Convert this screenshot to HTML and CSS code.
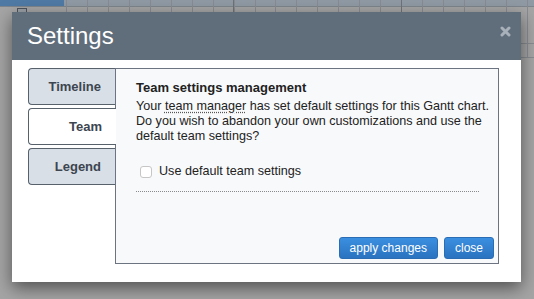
FILE: index.html
```html
<!DOCTYPE html>
<html lang="en">
<head>
  <meta charset="UTF-8">
  <title>Settings</title>
  <link rel="stylesheet" href="styles.css">
</head>
<body>
  <div class="dialog">
    <div class="dialog-header">
      <h1>Settings</h1>
      <span class="close-x">
        <svg width="11" height="11" viewBox="0 0 11 11"><path d="M2 2L9 9M9 2L2 9" stroke="#a8b1ba" stroke-width="3" stroke-linecap="round"/></svg>
      </span>
    </div>
    <div class="dialog-body">
      <div class="tabs">
        <div class="tab">Timeline</div>
        <div class="tab active">Team</div>
        <div class="tab">Legend</div>
      </div>
      <div class="panel">
        <h3>Team settings management</h3>
        <p>Your <span class="hint">team manager</span> has set default settings for this Gantt chart. Do you wish to abandon your own customizations and use the default team settings?</p>
        <label class="check-row"><input type="checkbox"> Use default team settings</label>
        <div class="sep"></div>
        <div class="actions">
          <button>apply changes</button>
          <button>close</button>
        </div>
      </div>
    </div>
  </div>
</body>
</html>
```
FILE: styles.css
```css
html, body { height:100%; }
body {
  margin:0; overflow:hidden;
  font-family:"Liberation Sans", Arial, sans-serif;
  background-color:#a5a5a5;
  background-image:
    linear-gradient(#9aa0a6, #9aa0a6),
    linear-gradient(#4d545c, #4d545c),
    linear-gradient(#4f7aa5, #4f7aa5),
    linear-gradient(transparent 43px, #888c90 43px 44px, transparent 44px 57px, #888c90 57px 58px, transparent 58px),
    repeating-linear-gradient(90deg, #6f7378 0 1px, transparent 1px 168px),
    repeating-linear-gradient(90deg, #888c90 0 1px, transparent 1px 20.95px),
    linear-gradient(#8f9aa4 0 6px, #7e858c 6px 7px, transparent 7px);
  background-size: 8px 3px, 10px 5px, 64px 6px, 13px 60px, 300px 58px, 470px 58px, 100% 100%;
  background-position: 18px 9px, 17px 8px, 0 0, 521px 0, 233px 0, 66px 0, 0 0;
  background-repeat:no-repeat;
}
.dialog { width:509px; height:270px; margin:12px 0 0 12px; background:#fff; box-shadow:0 6px 16px rgba(0,0,0,.5); display:flex; flex-direction:column; }
.dialog-header { height:48px; background:#606e7c; display:flex; justify-content:space-between; padding:0 10px 0 15px; box-sizing:border-box; }
.dialog-header h1 { margin:0; font-size:24px; font-weight:normal; color:#fff; line-height:48px; }
.close-x { margin-top:14px; height:11px; }
.close-x svg { display:block; }
.dialog-body { flex:1; display:flex; padding:8px 22px 18px 16px; }
.tabs { width:87px; flex:none; display:flex; flex-direction:column; gap:3px; }
.tab { height:37px; box-sizing:border-box; border:1px solid #56616c; border-right:none; border-radius:4px 0 0 4px; background:#d9dfe6; color:#3c4550; font-size:13px; font-weight:bold; line-height:35px; text-align:right; padding-right:14px; }
.tab.active { background:#fff; width:88px; position:relative; z-index:1; }
.panel { flex:1; border:1px solid #6b7480; background:#f8f9fb; padding:11px 4px 4px 20px; display:flex; flex-direction:column; color:#222; font-size:12.6px; line-height:15px; }
.panel h3 { margin:0; font-size:13px; }
.panel p { margin:4px 0 0; }
.hint { text-decoration:underline dotted #555; text-underline-offset:2px; }
.check-row { display:flex; align-items:center; gap:7px; margin:20px 0 0 4px; }
.check-row input { -webkit-appearance:none; appearance:none; width:12px; height:12px; margin:0; border:1px solid #c6c6c6; border-radius:3px; background:#fff; }
.sep { border-top:1px dotted #8a8a8a; margin:12px 15px 0 0; }
.actions { margin-top:auto; display:flex; justify-content:flex-end; gap:6px; }
button { height:22px; padding:0 10px; border:1px solid #2a6db5; border-radius:3px; background:linear-gradient(#3b8fe0, #2a73c0); color:#fff; font-family:inherit; font-size:12px; cursor:pointer; }
```
